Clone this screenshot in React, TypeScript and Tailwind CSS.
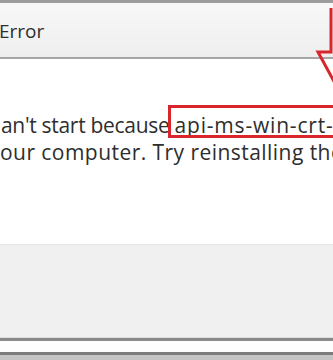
import React from "react";

function Arrow() {
  return (
    <svg className="absolute right-0 top-0" width="40" height="120" viewBox="0 0 40 120" fill="none">
      <path d="M38 8 V52 H25 L44 87" stroke="#d8262c" strokeWidth="3" strokeLinejoin="miter" />
    </svg>
  );
}

export default function App() {
  return (
    <div className="relative w-[333px] h-[360px] overflow-hidden bg-white flex flex-col font-['Open_Sans',sans-serif] text-[#2e2e2e]">
      {/* title bar */}
      <div className="h-[3px] bg-[#9c9c9c]" />
      <div className="h-[54px] bg-gradient-to-b from-[#f8f8f8] to-[#eeeeee] flex items-center text-[19px] leading-none -ml-[1px] pt-[2px]">
        Error
      </div>
      <div className="h-[2px] bg-[#a6a6a6]" />
      <div className="h-px bg-white" />

      {/* message */}
      <div className="h-[184px] bg-white pt-[52px] text-[21px] leading-[27px] whitespace-nowrap">
        <div className="relative ml-[1px]">
          <span className="tracking-[-0.3px]">an't start because </span>
          <span className="tracking-[0.8px]">api-ms-win-crt-runtime-l1-1-0.dll is missing</span>
          <span className="absolute left-[167px] -top-[7px] w-[200px] h-[33px] border-[3px] border-[#d8262c]" />
        </div>
        <div className="tracking-[0.45px]">our computer. Try reinstalling the program to fix this problem.</div>
      </div>

      {/* button area */}
      <div className="h-[93px] bg-[#f0f0f0] border-t border-[#e6e6e6]" />
      <div className="h-px bg-[#dcdcdc]" />
      <div className="h-[3px] bg-[#8a8a8a]" />
      <div className="h-[11px] bg-[#fdfdfd]" />
      <div className="h-[3px] bg-[#7c7c7c]" />
      <div className="flex-1 bg-[#c4c4c4]" />

      <Arrow />
    </div>
  );
}
